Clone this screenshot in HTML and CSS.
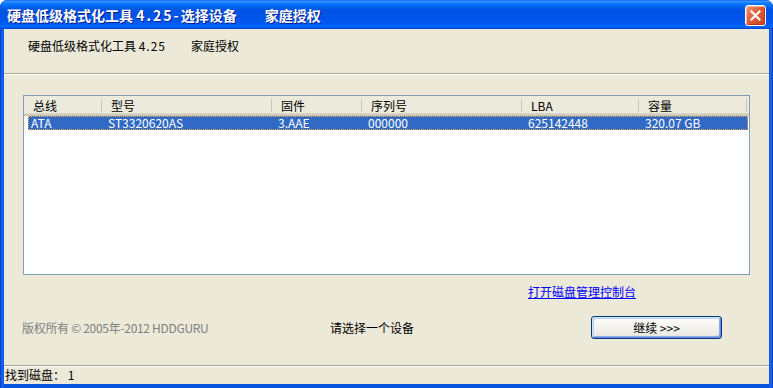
FILE: index.html
```html
<!DOCTYPE html>
<html lang="zh-CN">
<head>
	<meta charset="utf-8">
	<title>硬盘低级格式化工具 4.25-选择设备</title>
	<link rel="stylesheet" href="styles.css">
</head>
<body>
	<div class="window">
		<div class="titlebar">
			<span class="title">硬盘低级格式化工具 <span class="lat">4.25-</span>选择设备<span class="edition">家庭授权</span></span>
			<span class="close">
				<svg width="11" height="11" viewBox="0 0 11 11">
					<path d="M1.5 1.5 L9.5 9.5 M9.5 1.5 L1.5 9.5" stroke="#fff" stroke-width="2.2" stroke-linecap="square"/>
				</svg>
			</span>
		</div>
		<div class="client">
			<div class="head">
				<span>硬盘低级格式化工具 <span class="lat">4.25</span></span><span class="edition">家庭授权</span>
			</div>

			<div class="list">
				<div class="list-head">
					<div class="col">总线</div>
					<div class="col">型号</div>
					<div class="col">固件</div>
					<div class="col">序列号</div>
					<div class="col">LBA</div>
					<div class="col">容量</div>
				</div>
				<div class="row selected">
					<div class="cell first">ATA</div>
					<div class="cell">ST3320620AS</div>
					<div class="cell">3.AAE</div>
					<div class="cell">000000</div>
					<div class="cell">625142448</div>
					<div class="cell">320.07 GB</div>
				</div>
			</div>

			<div class="link-row"><a href="#">打开磁盘管理控制台</a></div>

			<div class="actions">
				<span class="copyright">版权所有 © 2005年-2012 HDDGURU</span>
				<span class="prompt">请选择一个设备</span>
				<button class="btn">继续 &gt;&gt;&gt;</button>
			</div>

			<div class="status">找到磁盘： 1</div>
		</div>
	</div>
</body>
</html>
```
FILE: styles.css
```css
* {
	box-sizing: border-box;
}

body {
	margin: 0;
	background-color: #fff;
	font-family: "Noto Sans CJK SC", sans-serif;
	font-size: 12px;
	color: #000;
}

.lat {
	letter-spacing: 1px;
}

.window {
	width: 773px;
	height: 388px;
	display: flex;
	flex-direction: column;
	background: linear-gradient(to right, #0831D9 0, #166AEE 2px, #0855DD 4px, #0855DD 769px, #166AEE 771px, #0831D9 773px);
	border-radius: 7px 7px 0 0;
	overflow: hidden;
}

.titlebar {
	height: 29px;
	flex: none;
	display: flex;
	align-items: center;
	justify-content: space-between;
	padding-left: 7px;
	padding-right: 7px;
	background: linear-gradient(to bottom, #0058EE 0, #3A93FF 1px, #288EFF 2px, #127DFF 3px, #036FFC 5px,
		#0262EE 7px, #0057E5 9px, #0054E3 12px, #0055EB 20px, #005BF5 24px, #026AFE 26px, #0062EF 27px, #0043CF 29px);
}

.title {
	color: #fff;
	font-size: 14px;
	font-weight: bold;
	line-height: 16px;
	text-shadow: 1px 1px 0 #0A1E8C;
	padding-top: 1px;
	white-space: nowrap;
}

.title .lat {
	letter-spacing: 2px;
}

.title .edition {
	margin-left: 28px;
}

.close {
	width: 21px;
	height: 21px;
	display: flex;
	align-items: center;
	justify-content: center;
	border: 1px solid #fff;
	border-radius: 3px;
	background: linear-gradient(135deg, #F09A7A 0, #E2623C 40%, #C9431F 100%);
	box-shadow: inset 1px 1px 0 #F6B49C, inset -1px -1px 0 #B8351A;
	margin-top: 2px;
}

.client {
	flex: 1;
	margin: 0 4px 4px 4px;
	background-color: #ECE9D8;
	display: flex;
	flex-direction: column;
}

.head {
	height: 45px;
	flex: none;
	padding: 10px 0 0 24px;
	line-height: 14px;
	border-bottom: 1px solid #ACA899;
	box-shadow: 0 1px 0 #fff;
}

.head .edition {
	margin-left: 25px;
}

.list {
	width: 727px;
	height: 180px;
	flex: none;
	margin: 21px 0 0 19px;
	border: 1px solid #7F9DB9;
	background-color: #fff;
}

.list-head {
	height: 20px;
	display: grid;
	grid-template-columns: 78px 170px 90px 160px 117px 108px;
	background: linear-gradient(to bottom, #EBEADB 0, #EBEADB 17px, #E2DECD 17px, #D6D2C2 18px, #CBC7B8 19px);
}

.col {
	padding-left: 9px;
	line-height: 19px;
	background: linear-gradient(#C7C5B2, #C7C5B2) right 3px / 1px 13px no-repeat;
}

.row {
	height: 14px;
	margin-left: 4px;
	width: 720px;
	display: grid;
	grid-template-columns: 73px 170px 90px 160px 117px 108px;
	line-height: 12px;
}

.selected {
	background-color: #316AC5;
	color: #fff;
	border: 1px dotted #EFA54A;
}

.cell {
	padding-left: 6px;
	white-space: nowrap;
}

.cell.first {
	padding-left: 2px;
}

.link-row {
	margin-top: 10px;
	padding-left: 524px;
	line-height: 14px;
}

.link-row a {
	color: #0000FF;
	text-decoration: underline;
}

.actions {
	margin-top: 17px;
	height: 23px;
	display: grid;
	grid-template-columns: 308px 261px 131px;
	align-items: center;
	padding-left: 18px;
	line-height: 14px;
}

.copyright {
	color: #808080;
	white-space: nowrap;
	letter-spacing: -0.3px;
}

.btn {
	width: 131px;
	height: 23px;
	font-family: inherit;
	font-size: 12px;
	color: #000;
	border: 1px solid #003C74;
	border-radius: 3px;
	background: linear-gradient(to bottom, #FFFFFF 0, #F4F3EE 50%, #ECEBE6 85%, #D6D0C5 100%);
	box-shadow: inset 1px 1px 0 #CEE7FF, inset -1px -1px 0 #6982EE, inset 2px 2px 0 #BCD4F6, inset -2px -2px 0 #89ADE4;
	padding: 0;
}

.status {
	margin-top: auto;
	height: 19px;
	padding-left: 1px;
	line-height: 18px;
	border-top: 1px solid #A8A596;
	box-shadow: inset 0 1px 0 #fff;
}
```
